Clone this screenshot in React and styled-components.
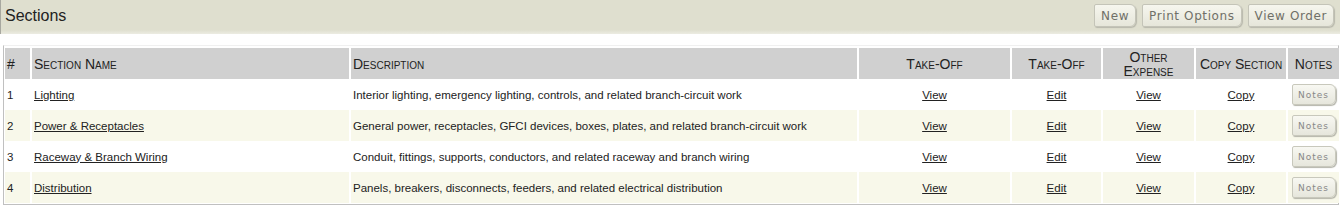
import React from 'react'
import styled, { createGlobalStyle } from 'styled-components'

const GlobalStyle = createGlobalStyle`
  body {
    margin: 0;
    background: #fff;
    font-family: "Liberation Sans", Arial, sans-serif;
  }
`

const Page = styled.div`
  width: 1340px;
`

const TitleBar = styled.div`
  height: 34px;
  display: flex;
  align-items: center;
  justify-content: space-between;
  background: linear-gradient(to bottom, #dfdfcf 0%, #dfdfcf 88%, #ecece2 100%);
  border-left: 1px solid #a8a8a0;
  padding: 0 6px 0 4px;
`

const Title = styled.h1`
  margin: 0;
  font-size: 16px;
  font-weight: normal;
  color: #222;
  padding-bottom: 2px;
`

const ButtonRow = styled.div`
  display: flex;
  gap: 6px;
  padding-bottom: 3px;
`

const BarButton = styled.button`
  height: 23px;
  padding: 0 6px;
  font-family: "DejaVu Sans", sans-serif;
  font-size: 12px;
  letter-spacing: 0.6px;
  color: #707068;
  background: linear-gradient(to bottom, #f6f6ee, #e6e6da);
  border: 1px solid #c4c4b8;
  border-radius: 2px 6px 6px 2px;
  box-shadow: 1px 1px 1px #b8b8ac;
  cursor: pointer;
`

const Content = styled.div`
  padding: 11px 1px 2px 3px;
`

const Box = styled.div`
  border: 1px solid #c0c0c0;
  border-top-color: #f0f0f0;
  padding: 2px 0 1px 1px;
`

const Table = styled.table`
  width: 100%;
  border-collapse: separate;
  border-spacing: 0;
  table-layout: fixed;
  font-size: 11.5px;
  color: #222;
`

const Th = styled.th`
  height: 31px;
  padding: 0 2px;
  background: #d0d0d0;
  border-right: 2px solid #fff;
  font-weight: normal;
  font-size: 14px;
  font-variant: small-caps;
  text-align: ${p => (p.$center ? 'center' : 'left')};
  line-height: 14px;
  white-space: nowrap;
  &:last-child {
    border-right: none;
  }
`

const Row = styled.tr`
  background: ${p => (p.$alt ? '#f8f8ea' : '#fff')};
`

const Td = styled.td`
  height: 31px;
  padding: 0 2px;
  border-right: 2px solid #fff;
  text-align: ${p => (p.$center ? 'center' : 'left')};
  white-space: nowrap;
  &:last-child {
    border-right: none;
  }
`

const TableLink = styled.a`
  color: #222;
  text-decoration: underline;
  cursor: pointer;
`

const NotesButton = styled.button`
  width: 44px;
  height: 21px;
  padding: 0;
  font-family: "DejaVu Sans", sans-serif;
  font-size: 9px;
  letter-spacing: 1px;
  color: #888;
  background: linear-gradient(to bottom, #f8f8f2, #e6e6dc);
  border: 1px solid #c8c8bc;
  border-radius: 2px 6px 6px 2px;
  box-shadow: 1px 1px 1px #b4b4aa;
`

const sections = [
  { name: 'Lighting', desc: 'Interior lighting, emergency lighting, controls, and related branch-circuit work' },
  { name: 'Power & Receptacles', desc: 'General power, receptacles, GFCI devices, boxes, plates, and related branch-circuit work' },
  { name: 'Raceway & Branch Wiring', desc: 'Conduit, fittings, supports, conductors, and related raceway and branch wiring' },
  { name: 'Distribution', desc: 'Panels, breakers, disconnects, feeders, and related electrical distribution' }
]

export default function App() {
  return (
    <Page>
      <GlobalStyle />
      <TitleBar>
        <Title>Sections</Title>
        <ButtonRow>
          <BarButton>New</BarButton>
          <BarButton>Print Options</BarButton>
          <BarButton>View Order</BarButton>
        </ButtonRow>
      </TitleBar>
      <Content>
        <Box>
          <Table>
            <colgroup>
              <col style={{ width: 27 }} />
              <col style={{ width: 319 }} />
              <col style={{ width: 508 }} />
              <col style={{ width: 153 }} />
              <col style={{ width: 91 }} />
              <col style={{ width: 93 }} />
              <col style={{ width: 92 }} />
              <col style={{ width: 51 }} />
            </colgroup>
            <thead>
              <tr>
                <Th>#</Th>
                <Th>Section Name</Th>
                <Th>Description</Th>
                <Th $center>Take-Off</Th>
                <Th $center>Take-Off</Th>
                <Th $center>Other<br />Expense</Th>
                <Th $center>Copy Section</Th>
                <Th $center>Notes</Th>
              </tr>
            </thead>
            <tbody>
              {sections.map((s, i) => (
                <Row key={s.name} $alt={i % 2 === 1}>
                  <Td>{i + 1}</Td>
                  <Td><TableLink>{s.name}</TableLink></Td>
                  <Td>{s.desc}</Td>
                  <Td $center><TableLink>View</TableLink></Td>
                  <Td $center><TableLink>Edit</TableLink></Td>
                  <Td $center><TableLink>View</TableLink></Td>
                  <Td $center><TableLink>Copy</TableLink></Td>
                  <Td $center><NotesButton>Notes</NotesButton></Td>
                </Row>
              ))}
            </tbody>
          </Table>
        </Box>
      </Content>
    </Page>
  )
}
